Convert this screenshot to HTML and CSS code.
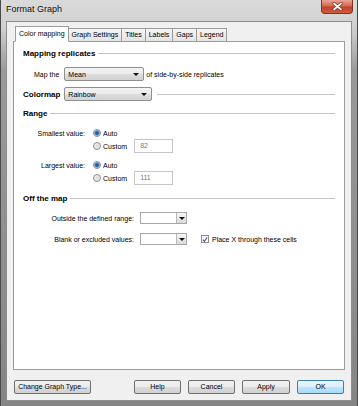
FILE: index.html
```html
<!DOCTYPE html>
<html lang="en">
<head>
    <meta charset="UTF-8">
    <title>Format Graph</title>
    <link rel="stylesheet" href="styles.css">
</head>
<body>
<div class="window">
    <div class="titlebar">
        <span class="title">Format Graph</span>
        <span class="close">
            <svg width="11" height="9" viewBox="0 0 11 9">
                <path d="M2 1.5 L9 7.5 M9 1.5 L2 7.5" stroke="#7a2a1c" stroke-width="3.2" stroke-linecap="round"/>
                <path d="M2 1.5 L9 7.5 M9 1.5 L2 7.5" stroke="#fff" stroke-width="1.8" stroke-linecap="round"/>
            </svg>
        </span>
    </div>
    <div class="client">
        <div class="tabs">
            <span class="tab active">Color mapping</span>
            <span class="tab">Graph Settings</span>
            <span class="tab">Titles</span>
            <span class="tab">Labels</span>
            <span class="tab">Gaps</span>
            <span class="tab">Legend</span>
        </div>
        <div class="panel">
            <div class="head">
                <span>Mapping replicates</span>
                <span class="rule"></span>
            </div>
            <div class="map-row">
                <span>Map the</span>
                <div class="combo mean"><span>Mean</span><i class="arrow"></i></div>
                <span class="after">of side-by-side replicates</span>
            </div>
            <div class="head colormap">
                <span>Colormap</span>
                <div class="combo rainbow"><span>Rainbow</span><i class="arrow"></i></div>
                <span class="rule"></span>
            </div>
            <div class="head range-head">
                <span>Range</span>
                <span class="rule"></span>
            </div>
            <div class="range">
                <span class="range-label">Smallest value:</span>
                <span class="opt"><i class="radio on"></i>Auto</span>
                <span></span>
                <span class="opt"><i class="radio"></i>Custom<span class="num">82</span></span>
            </div>
            <div class="range second">
                <span class="range-label">Largest value:</span>
                <span class="opt"><i class="radio on"></i>Auto</span>
                <span></span>
                <span class="opt"><i class="radio"></i>Custom<span class="num">111</span></span>
            </div>
            <div class="head off-head">
                <span>Off the map</span>
                <span class="rule"></span>
            </div>
            <div class="off-row">
                <span class="off-label">Outside the defined range:</span>
                <div class="drop"><span class="drop-btn"><i class="arrow"></i></span></div>
            </div>
            <div class="off-row">
                <span class="off-label">Blank or excluded values:</span>
                <div class="drop"><span class="drop-btn"><i class="arrow"></i></span></div>
                <span class="check-opt">
                    <span class="check">
                        <svg width="7" height="7" viewBox="0 0 7 7">
                            <path d="M1 3.6 L2.8 5.6 L6 1.2" fill="none" stroke="#3d5a8c" stroke-width="1.3"/>
                        </svg>
                    </span>
                    Place X through these cells
                </span>
            </div>
        </div>
        <div class="buttons">
            <span class="btn wide">Change Graph Type...</span>
            <div class="btn-group">
                <span class="btn">Help</span>
                <span class="btn">Cancel</span>
                <span class="btn apply">Apply</span>
                <span class="btn ok">OK</span>
            </div>
        </div>
    </div>
</div>
</body>
</html>
```

FILE: styles.css
```css
body{
    margin: 0;
    font: 7px "Liberation Sans", Arial, sans-serif;
    color: #000;
    background: #6f6f6f;
}

.window{
    width: 358px;
    height: 406px;
    box-sizing: border-box;
    display: flex;
    flex-direction: column;
    padding: 0 5px 5px 5px;
    border-left: 1px solid #4a4a4a;
    border-right: 1px solid #4a4a4a;
    background: linear-gradient(#dadada 0, #d0d0d0 28px, #9a9a9a 70px, #858585 100%);
}

/* title bar */
.titlebar{
    height: 21px;
    flex: none;
    display: flex;
    align-items: flex-start;
    margin: 0 -5px;
    padding: 0 4px 0 5px;
}
.title{
    font-size: 9px;
    line-height: 18px;
    color: #111;
}
.close{
    margin-left: auto;
    width: 32px;
    height: 14px;
    box-sizing: border-box;
    border: 1px solid #7e3526;
    border-top: none;
    border-radius: 0 0 4px 4px;
    background: linear-gradient(#e7a594 0, #d46a52 45%, #c2412a 55%, #cf5d3f 100%);
    display: flex;
    align-items: center;
    justify-content: center;
}
.close svg{
    display: block;
}

/* client area */
.client{
    flex: 1;
    display: flex;
    flex-direction: column;
    background: #f0f0f0;
    border: 1px solid #8e8e8e;
    padding: 4px 6px 6px 6px;
}

.tabs{
    display: flex;
    align-items: flex-end;
    padding-left: 2px;
    margin-bottom: -1px;
    flex: none;
}
.tab{
    height: 14px;
    box-sizing: border-box;
    line-height: 12px;
    padding: 0 3px;
    border: 1px solid #9c9c9c;
    background: linear-gradient(#f4f4f4, #e4e4e4);
    margin-left: -1px;
}
.tab.active{
    height: 16px;
    line-height: 14px;
    margin-left: 0;
    background: #fff;
    border-bottom-color: #fff;
    position: relative;
}

.panel{
    flex: 1;
    background: #fff;
    border: 1px solid #9c9c9c;
    padding: 6px 9px 0 9px;
}

/* group headers */
.head{
    display: flex;
    align-items: center;
    gap: 3px;
    height: 10px;
    font-weight: bold;
    font-size: 8px;
}
.rule{
    flex: 1;
    height: 1px;
    background: #c4c4c4;
}

/* drop down lists */
.combo{
    height: 14px;
    box-sizing: border-box;
    border: 1px solid #8e8f8f;
    border-radius: 2px;
    background: linear-gradient(#f3f3f3 0, #ebebeb 50%, #dedede 51%, #d2d2d2 100%);
    display: flex;
    align-items: center;
    padding: 0 4px 0 3px;
    font-weight: normal;
    font-size: 7px;
}
.combo span{
    flex: 1;
}
.combo.mean{
    width: 80px;
    margin-left: 5px;
}
.combo.rainbow{
    width: 88px;
    margin: 0 2px 0 1px;
}
.arrow{
    width: 0;
    height: 0;
    border-left: 3px solid transparent;
    border-right: 3px solid transparent;
    border-top: 3px solid #111;
}

.map-row{
    display: flex;
    align-items: center;
    height: 14px;
    margin-top: 9px;
    padding-left: 11px;
}
.map-row .after{
    margin-left: 2px;
}
.colormap{
    height: 14px;
    margin-top: 6px;
}
.range-head{
    margin-top: 7px;
}

/* range radios */
.range{
    display: grid;
    grid-template-columns: 62px auto;
    grid-template-rows: 12px 14px;
    column-gap: 8px;
    align-items: center;
    margin-top: 9px;
}
.range.second{
    margin-top: 6px;
}
.range-label{
    text-align: right;
}
.opt{
    display: flex;
    align-items: center;
    gap: 2px;
}
.radio{
    width: 8px;
    height: 8px;
    box-sizing: border-box;
    border-radius: 50%;
    border: 1px solid #8b8b8b;
    background: radial-gradient(circle, #dcdcdc 0, #f4f4f4 100%);
}
.radio.on{
    background: radial-gradient(circle, #1b5da6 0, #2a6db5 1.6px, #8db6e0 2.6px, #eef2f6 3.2px);
}
.num{
    margin-left: 5px;
    width: 39px;
    height: 14px;
    box-sizing: border-box;
    border: 1px solid #c6c6c6;
    padding-left: 5px;
    line-height: 12px;
    color: #7a7a7a;
}

.off-head{
    margin-top: 8px;
}
.off-row{
    display: flex;
    align-items: center;
    height: 12px;
    margin-top: 9px;
}
.off-label{
    width: 111px;
    text-align: right;
    margin-right: 6px;
}
.drop{
    width: 47px;
    height: 12px;
    box-sizing: border-box;
    border: 1px solid #a8a8a8;
    background: #fff;
    display: flex;
    justify-content: flex-end;
}
.drop-btn{
    width: 9px;
    border-left: 1px solid #b8b8b8;
    background: linear-gradient(#f6f6f6, #dadada);
    display: flex;
    align-items: center;
    justify-content: center;
}
.check-opt{
    display: flex;
    align-items: center;
    gap: 3px;
    margin-left: 14px;
}
.check{
    width: 8px;
    height: 8px;
    box-sizing: border-box;
    border: 1px solid #8e8f8f;
    background: linear-gradient(#f0f0f0, #fff);
    display: flex;
    align-items: center;
    justify-content: center;
}
.check svg{
    display: block;
}

/* bottom buttons */
.buttons{
    display: flex;
    margin-top: 10px;
    padding: 0 1px;
    flex: none;
}
.btn-group{
    margin-left: auto;
    display: flex;
    gap: 7px;
}
.btn{
    width: 47px;
    height: 14px;
    box-sizing: border-box;
    border: 1px solid #707070;
    border-radius: 2px;
    background: linear-gradient(#f2f2f2 0, #ebebeb 50%, #dddddd 51%, #cfcfcf 100%);
    text-align: center;
    line-height: 12px;
}
.btn.wide{
    width: 77px;
}
.btn.apply{
    width: 48px;
}
.btn.ok{
    border-color: #3c7fb1;
    background: linear-gradient(#eaf6fd 0, #d9f0fc 50%, #bee6fd 51%, #a7d9f5 100%);
}
```
